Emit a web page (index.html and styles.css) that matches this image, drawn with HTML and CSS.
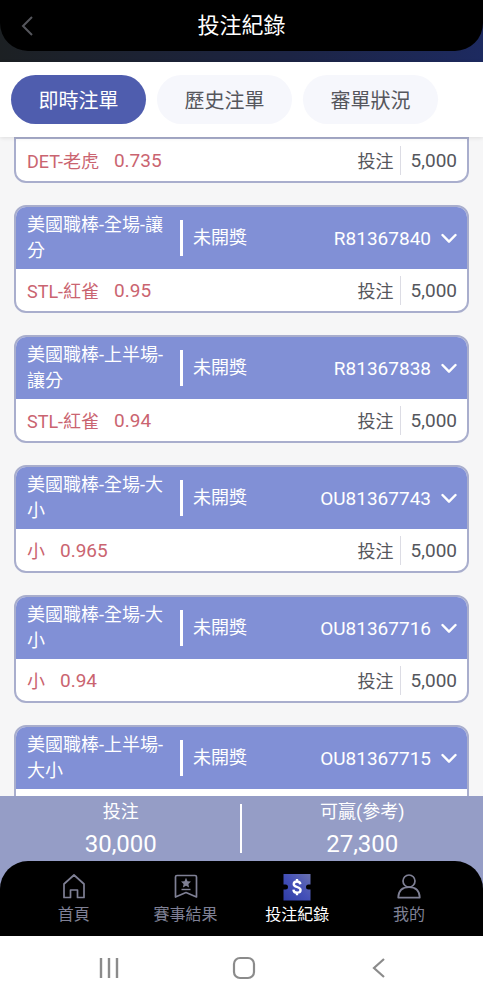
FILE: index.html
```html
<!DOCTYPE html>
<html lang="zh-Hant">
  <head>
    <meta charset="utf-8">
    <meta name="viewport" content="width=device-width">
    <title>投注紀錄</title>
    <link rel="stylesheet" href="styles.css">
  </head>
  <body>
    <!-- Shared icons -->
    <svg class="defs" aria-hidden="true">
      <symbol id="chevron" viewBox="0 0 16 11">
        <path d="M1.5 2 L8 8.7 L14.5 2" fill="none" stroke="currentColor" stroke-width="2.4" stroke-linecap="round" stroke-linejoin="round" />
      </symbol>
    </svg>

    <header class="top">
      <div class="bar">
        <button class="back" type="button" aria-label="返回">
          <svg width="12" height="20" viewBox="0 0 12 20">
            <path d="M11 1 L2 10 L11 19" fill="none" stroke="currentColor" stroke-width="2" />
          </svg>
        </button>
        <h1>投注紀錄</h1>
      </div>
    </header>

    <nav class="tabs">
      <button class="tab active" type="button">即時注單</button>
      <button class="tab" type="button">歷史注單</button>
      <button class="tab" type="button">審單狀況</button>
    </nav>

    <main class="list">
      <!-- Scrolled card, only the body is left in view -->
      <article class="card scrolled">
        <div class="card-body">
          <span class="pick">DET-老虎</span><span class="odds">0.735</span>
          <span class="label">投注</span><span class="amount">5,000</span>
        </div>
      </article>

      <article class="card">
        <div class="card-head">
          <h2>美國職棒-全場-讓分</h2>
          <span class="status">未開獎</span>
          <span class="number">R81367840</span>
          <button class="toggle" type="button" aria-label="展開"><svg width="16" height="11"><use href="#chevron" /></svg></button>
        </div>
        <div class="card-body">
          <span class="pick">STL-紅雀</span><span class="odds">0.95</span>
          <span class="label">投注</span><span class="amount">5,000</span>
        </div>
      </article>

      <article class="card">
        <div class="card-head">
          <h2>美國職棒-上半場-讓分</h2>
          <span class="status">未開獎</span>
          <span class="number">R81367838</span>
          <button class="toggle" type="button" aria-label="展開"><svg width="16" height="11"><use href="#chevron" /></svg></button>
        </div>
        <div class="card-body">
          <span class="pick">STL-紅雀</span><span class="odds">0.94</span>
          <span class="label">投注</span><span class="amount">5,000</span>
        </div>
      </article>

      <article class="card">
        <div class="card-head">
          <h2>美國職棒-全場-大小</h2>
          <span class="status">未開獎</span>
          <span class="number">OU81367743</span>
          <button class="toggle" type="button" aria-label="展開"><svg width="16" height="11"><use href="#chevron" /></svg></button>
        </div>
        <div class="card-body">
          <span class="pick">小</span><span class="odds">0.965</span>
          <span class="label">投注</span><span class="amount">5,000</span>
        </div>
      </article>

      <article class="card">
        <div class="card-head">
          <h2>美國職棒-全場-大小</h2>
          <span class="status">未開獎</span>
          <span class="number">OU81367716</span>
          <button class="toggle" type="button" aria-label="展開"><svg width="16" height="11"><use href="#chevron" /></svg></button>
        </div>
        <div class="card-body">
          <span class="pick">小</span><span class="odds">0.94</span>
          <span class="label">投注</span><span class="amount">5,000</span>
        </div>
      </article>

      <article class="card">
        <div class="card-head">
          <h2>美國職棒-上半場-大小</h2>
          <span class="status">未開獎</span>
          <span class="number">OU81367715</span>
          <button class="toggle" type="button" aria-label="展開"><svg width="16" height="11"><use href="#chevron" /></svg></button>
        </div>
        <div class="card-body"></div>
      </article>
    </main>

    <footer class="bottom">
      <div class="summary">
        <div class="total">
          <span class="total-label">投注</span>
          <span class="total-value">30,000</span>
        </div>
        <div class="total">
          <span class="total-label">可贏(參考)</span>
          <span class="total-value">27,300</span>
        </div>
      </div>

      <nav class="menu">
        <a href="#home">
          <svg width="28" height="28" viewBox="0 0 28 28">
            <path d="M4 24.5 V11 L14 2 L24 11 V24.5 H17.5 V17 H10.5 V24.5 Z" fill="none" stroke="currentColor" stroke-width="1.7" stroke-linejoin="round" />
          </svg>
          首頁
        </a>
        <a href="#results">
          <svg width="28" height="28" viewBox="0 0 28 28">
            <path d="M5 2.5 H23 Q24.5 2.5 24.5 4 V24 L14 19.500 L3.500 24 V4 Q3.500 2.5 5 2.5 Z" fill="none" stroke="currentColor" stroke-width="1.7" stroke-linejoin="round" />
            <path d="M14 4.8 L15.5 8.2 L19 8.6 L16.4 11 L17.1 14.4 L14 12.7 L10.9 14.4 L11.6 11 L9 8.6 L12.5 8.2 Z" fill="currentColor" />
            <path d="M9.500 16.500 H18.500" stroke="currentColor" stroke-width="1.4" />
          </svg>
          賽事結果
        </a>
        <a class="active" href="#records">
          <svg width="28" height="28" viewBox="0 0 28 28">
            <defs>
              <linearGradient id="ticket" x1="0" y1="1" x2="1" y2="0">
                <stop offset="0" stop-color="#2f3da6" />
                <stop offset="0.5" stop-color="#4450b8" />
                <stop offset="1" stop-color="#6a72b0" />
              </linearGradient>
            </defs>
            <path d="M0.5 1 H27.5 V11.500 L25.500 11.500 A2.500 2.500 0 0 0 25.500 16.500 L27.500 16.500 V27.500 H0.5 V16.500 L2.500 16.500 A2.500 2.500 0 0 0 2.500 11.500 L0.5 11.500 Z" fill="url(#ticket)" />
            <path d="M17.4 11.2 C17.1 9.3 15.9 8.5 14 8.5 C12.1 8.5 10.7 9.5 10.7 11.2 C10.7 14.7 17.6 13.3 17.6 17 C17.6 18.8 16.2 19.7 14.1 19.7 C11.9 19.7 10.5 18.6 10.4 16.6 M14 6 V8.5 M14 19.7 V22.2" fill="none" stroke="#fff" stroke-width="2.300" />
          </svg>
          投注紀錄
        </a>
        <a href="#mine">
          <svg width="28" height="28" viewBox="0 0 28 28">
            <circle cx="14" cy="8" r="6" fill="none" stroke="currentColor" stroke-width="1.7" />
            <path d="M3.2 24.6 C3.5 18 7.5 14.2 14 14.2 C20.5 14.2 24.5 18 24.8 24.6 Z" fill="none" stroke="currentColor" stroke-width="1.7" stroke-linejoin="round" />
          </svg>
          我的
        </a>
      </nav>
    </footer>

    <!-- Phone navigation keys -->
    <div class="keys">
      <button type="button" aria-label="最近">
        <svg width="24" height="24" viewBox="0 0 24 24">
          <path d="M4 2 V22 M12 2 V22 M20 2 V22" stroke="currentColor" stroke-width="2.4" />
        </svg>
      </button>
      <button type="button" aria-label="主畫面">
        <svg width="24" height="24" viewBox="0 0 24 24">
          <rect x="2" y="2" width="20" height="20" rx="6" fill="none" stroke="currentColor" stroke-width="2.2" />
        </svg>
      </button>
      <button type="button" aria-label="返回">
        <svg width="24" height="24" viewBox="0 0 24 24">
          <path d="M17 3 L7 12 L17 21" fill="none" stroke="currentColor" stroke-width="2.2" />
        </svg>
      </button>
    </div>
  </body>
</html>
```
FILE: styles.css
```css
* {
  box-sizing: border-box;
}
body {
  margin: 0;
  height: 100vh;
  display: flex;
  flex-direction: column;
  overflow: hidden;
  background: #f6f6f7;
  font-family: Roboto, "Noto Sans CJK TC", sans-serif;
  font-size: 18px;
  color: #55565c;
}
button {
  margin: 0;
  padding: 0;
  border: 0;
  background: none;
  font: inherit;
  color: inherit;
}
svg {
  display: block;
}
h1, h2 {
  margin: 0;
  font-weight: 400;
}
.defs {
  position: absolute;
  width: 0;
  height: 0;
}

/* Title bar */
.top {
  flex: none;
  padding-bottom: 11px;
  background: linear-gradient(to right, #1c2023, #1c2444 60%, #1d2a60);
}
.bar {
  height: 51px;
  display: grid;
  grid-template-columns: 54px 1fr 54px;
  align-items: center;
  background: #000;
  border-radius: 0 0 28px 28px;
}
.back {
  justify-self: center;
  color: #55565c;
}
.bar h1 {
  text-align: center;
  font-size: 22px;
  line-height: 32px;
  color: #fff;
}

/* Tabs */
.tabs {
  flex: none;
  display: flex;
  gap: 11px;
  padding: 13px 11px;
  background: #fff;
  box-shadow: 0 1px 4px rgba(0, 0, 0, 0.1);
  z-index: 1;
}
.tab {
  width: 135px;
  height: 49px;
  border-radius: 25px;
  background: #f6f7fc;
  font-size: 20px;
}
.tab.active {
  background: #4f5dae;
  color: #fff;
}

/* Bet cards */
.list {
  flex: 1;
  min-height: 0;
  overflow: hidden;
  padding: 0 14px;
}
.card {
  margin-bottom: 22px;
  border: 2px solid #a9aecd;
  border-radius: 12px;
  overflow: hidden;
  background: #fff;
}
.card.scrolled {
  border-radius: 0 0 12px 12px;
}
.card-head {
  height: 62px;
  display: flex;
  align-items: center;
  padding: 0 10px 0 11px;
  background: #8190d6;
  color: #fff;
}
.card-head h2 {
  width: 153px;
  font-size: 18px;
  line-height: 26px;
}
.status {
  flex: 1;
  padding-left: 10px;
  border-left: 3px solid #fff;
  line-height: 36px;
}
.number {
  font-size: 19px;
}
.toggle {
  margin-left: 10px;
}
.card-body {
  height: 42px;
  display: flex;
  align-items: center;
  padding: 0 10px 0 11px;
}
.pick, .odds {
  color: #ca6470;
}
.odds, .amount {
  font-size: 19px;
}
.odds {
  margin-left: 15px;
}
.label {
  margin-left: auto;
}
.amount {
  margin-left: 6px;
  padding-left: 10px;
  border-left: 1px solid #dcdce4;
  line-height: 29px;
}

/* Totals and menu */
.bottom {
  flex: none;
  background: #959dc6;
  color: #fff;
}
.summary {
  display: flex;
  height: 65px;
}
.total {
  flex: 1;
  display: flex;
  flex-direction: column;
  align-items: center;
  position: relative;
}
.total + .total::before {
  content: "";
  position: absolute;
  left: -2px;
  top: 8px;
  bottom: 8px;
  width: 2px;
  background: #fff;
}
.total-label {
  line-height: 32px;
}
.total-value {
  font-size: 24px;
  line-height: 32px;
}
.menu {
  display: flex;
  height: 75px;
  padding: 12px 18px 0;
  background: #000;
  border-radius: 28px 28px 0 0;
}
.menu a {
  flex: 1;
  display: flex;
  flex-direction: column;
  align-items: center;
  font-size: 16px;
  line-height: 28px;
  color: #7f8095;
  text-decoration: none;
}
.menu a.active {
  color: #fff;
}

.keys {
  flex: none;
  display: flex;
  justify-content: space-around;
  align-items: center;
  height: 64px;
  padding: 0 37px 0 41px;
  background: #fff;
  color: #8b8b8b;
}
```
